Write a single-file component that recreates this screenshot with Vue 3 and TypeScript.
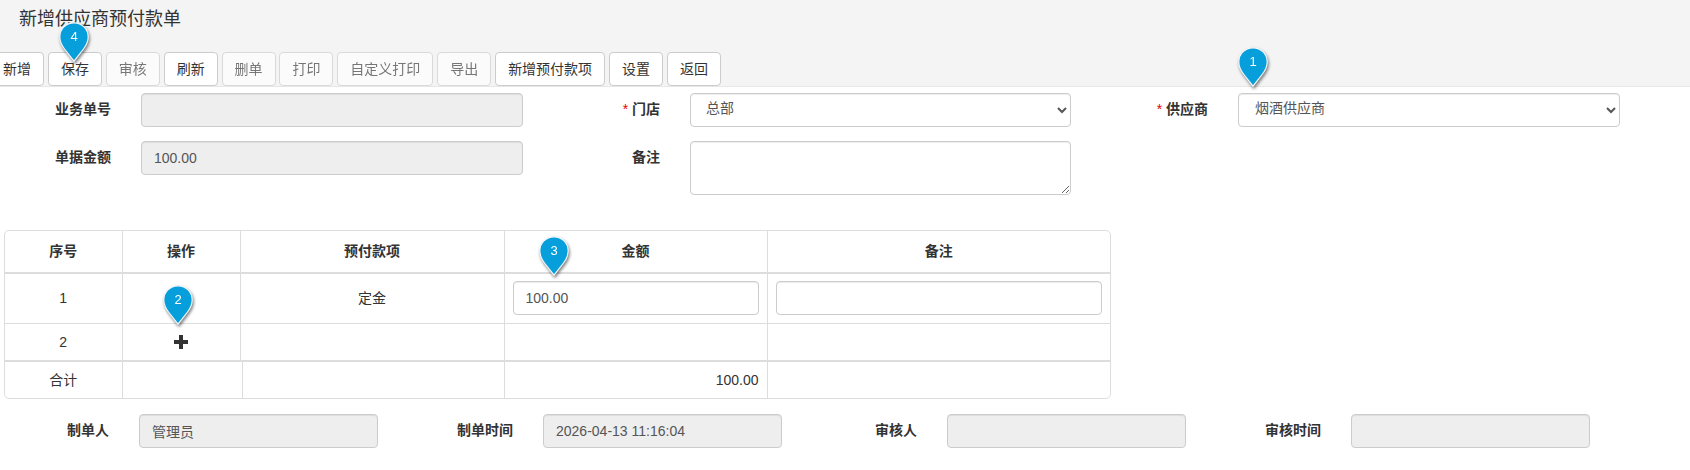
<script setup lang="ts">
interface Btn { label: string; disabled?: boolean }
const buttons: Btn[] = [
  { label: '新增' }, { label: '保存' }, { label: '审核', disabled: true }, { label: '刷新' },
  { label: '删单', disabled: true }, { label: '打印', disabled: true }, { label: '自定义打印', disabled: true },
  { label: '导出', disabled: true }, { label: '新增预付款项' }, { label: '设置' }, { label: '返回' },
]
const pins = [
  { n: 1, cls: 'p1' }, { n: 2, cls: 'p2' }, { n: 3, cls: 'p3' }, { n: 4, cls: 'p4' },
]
</script>

<template>
  <div class="page">
    <header class="head">
      <h1 class="title">新增供应商预付款单</h1>
      <div class="toolbar">
        <button v-for="b in buttons" :key="b.label" class="btn" :disabled="b.disabled" type="button">{{ b.label }}</button>
      </div>
    </header>

    <section class="form">
      <label class="lab">业务单号</label>
      <input class="ctl" disabled />
      <label class="lab"><i>*</i> 门店</label>
      <select class="ctl sel store"><option>总部</option></select>
      <label class="lab"><i>*</i> 供应商</label>
      <select class="ctl sel"><option>烟酒供应商</option></select>
      <label class="lab">单据金额</label>
      <input class="ctl" disabled value="100.00" />
      <label class="lab">备注</label>
      <textarea class="ctl area"></textarea>
    </section>

    <div class="tablewrap">
      <table class="tb">
        <colgroup><col class="c1" /><col class="c2" /><col class="c3" /><col class="c4" /><col class="c5" /></colgroup>
        <thead>
          <tr><th>序号</th><th>操作</th><th>预付款项</th><th>金额</th><th>备注</th></tr>
        </thead>
        <tbody>
          <tr class="r1">
            <td>1</td><td></td><td>定金</td>
            <td><input class="ctl cell" value="100.00" /></td>
            <td><input class="ctl cell" /></td>
          </tr>
          <tr class="r2">
            <td>2</td>
            <td>
              <svg class="plus" width="14" height="14" viewBox="0 0 14 14"><path d="M5 0h4v5h5v4H9v5H5V9H0V5h5z" fill="#333" /></svg>
            </td>
            <td></td><td></td><td></td>
          </tr>
        </tbody>
      </table>
      <table class="tb foot">
        <colgroup><col class="c1" /><col class="f2" /><col class="f3" /><col class="c4" /><col class="c5" /></colgroup>
        <tbody>
          <tr><td>合计</td><td></td><td></td><td class="num">100.00</td><td></td></tr>
        </tbody>
      </table>
    </div>

    <section class="bottom">
      <label class="lab">制单人</label>
      <input class="ctl" disabled value="管理员" />
      <label class="lab">制单时间</label>
      <input class="ctl" disabled value="2026-04-13 11:16:04" />
      <label class="lab">审核人</label>
      <input class="ctl" disabled />
      <label class="lab">审核时间</label>
      <input class="ctl" disabled />
    </section>

    <div v-for="p in pins" :key="p.n" class="pin" :class="p.cls">
      <svg width="34" height="44" viewBox="0 0 34 44">
        <path d="M15 0.800C23 0.800 29.200 7 29.200 15C29.200 19.500 27.500 23 24.500 27L15 39.200L5.500 27C2.500 23 0.800 19.500 0.800 15C0.800 7 7 0.800 15 0.800Z" fill="#069fdb" stroke="#f4f8fa" stroke-width="1.200" />
      </svg>
      <span>{{ p.n }}</span>
    </div>
  </div>
</template>

<style>
html, body { margin: 0; background: #fff; }
</style>

<style scoped>
.page {
  position: relative;
  width: 1690px;
  height: 470px;
  overflow: hidden;
  font-family: "Liberation Sans", "Noto Sans CJK SC", sans-serif;
  font-size: 14px;
  color: #333;
  background: #fff;
}
.head {
  height: 86px;
  background: #f4f4f4;
  border-bottom: 1px solid #e7e7e7;
}
.title {
  margin: 0;
  padding: 8px 0 0 19px;
  height: 44px;
  box-sizing: border-box;
  font-size: 18px;
  font-weight: 400;
  line-height: 22px;
}
.toolbar {
  display: flex;
  gap: 3.9px;
  margin: 8px 0 0 -10px;
}
.btn {
  flex: none;
  height: 34px;
  padding: 6px 12px;
  box-sizing: border-box;
  font: inherit;
  line-height: 20px;
  color: #333;
  background: #fff;
  border: 1px solid #ccc;
  border-radius: 4px;
}
.btn:disabled { opacity: 0.65; }
.form {
  display: grid;
  grid-template-columns: 111px 382px 107px 381px 107px 382px;
  column-gap: 30px;
  row-gap: 14px;
  margin-top: 6px;
  align-items: start;
}
.lab {
  font-weight: 700;
  text-align: right;
  line-height: 32px;
  height: 34px;
  white-space: nowrap;
}
.lab i { color: #e00; font-style: normal; font-weight: 400; }
.ctl {
  display: block;
  width: 100%;
  height: 34px;
  box-sizing: border-box;
  padding: 6px 12px;
  font: inherit;
  font-weight: 400;
  line-height: 20px;
  color: #555;
  background: #fff;
  border: 1px solid #ccc;
  border-radius: 4px;
  box-shadow: inset 0 1px 1px rgba(0, 0, 0, 0.075);
  margin: 0;
}
.ctl:disabled { background: #eee; opacity: 1; }
.sel { padding: 4px 12px 8px 12px; }
.store { padding-left: 11px; }
.area { height: 54px; resize: vertical; }
.tablewrap {
  width: 1107px;
  margin: 35px 0 0 4px;
  border: 1px solid #ddd;
  border-radius: 5px;
  box-sizing: border-box;
  overflow: hidden;
}
.tb {
  width: 1105px;
  table-layout: fixed;
  border-collapse: collapse;
}
.c1 { width: 117px; }
.c2 { width: 118px; }
.c3 { width: 264px; }
.c4 { width: 263px; }
.c5 { width: 343px; }
.f2 { width: 120px; }
.f3 { width: 262px; }
.tb th, .tb td {
  padding: 0 8px;
  text-align: center;
  border-left: 1px solid #ddd;
  border-bottom: 1px solid #ddd;
  box-sizing: border-box;
  line-height: 20px;
}
.tb th:first-child, .tb td:first-child { border-left: 0; }
.tb th {
  height: 42px;
  padding-bottom: 2px;
  font-weight: 700;
  border-bottom-width: 2px;
}
.r1 td { height: 50px; }
.r2 td { height: 38px; border-bottom-width: 2px; }
.foot td { height: 36px; border-bottom: 0; }
.tb .num { text-align: right; }
.plus { display: block; margin: 1px auto 0; }
.cell { width: 100%; }
.bottom {
  display: grid;
  grid-template-columns: 109px 239px 105px 239px 105px 239px 105px 239px;
  column-gap: 30px;
  margin-top: 15px;
}
.pin {
  position: absolute;
  width: 34px;
  height: 44px;
  filter: drop-shadow(1.500px 2px 1.500px rgba(0, 0, 0, 0.5));
}
.pin svg { display: block; }
.pin span {
  position: absolute;
  left: 0;
  top: 6px;
  width: 30px;
  text-align: center;
  font-size: 13px;
  line-height: 18px;
  color: #fff;
}
.p1 { left: 1238px; top: 47px; }
.p2 { left: 163px; top: 285px; }
.p3 { left: 539px; top: 236px; }
.p4 { left: 59px; top: 22px; }
</style>
